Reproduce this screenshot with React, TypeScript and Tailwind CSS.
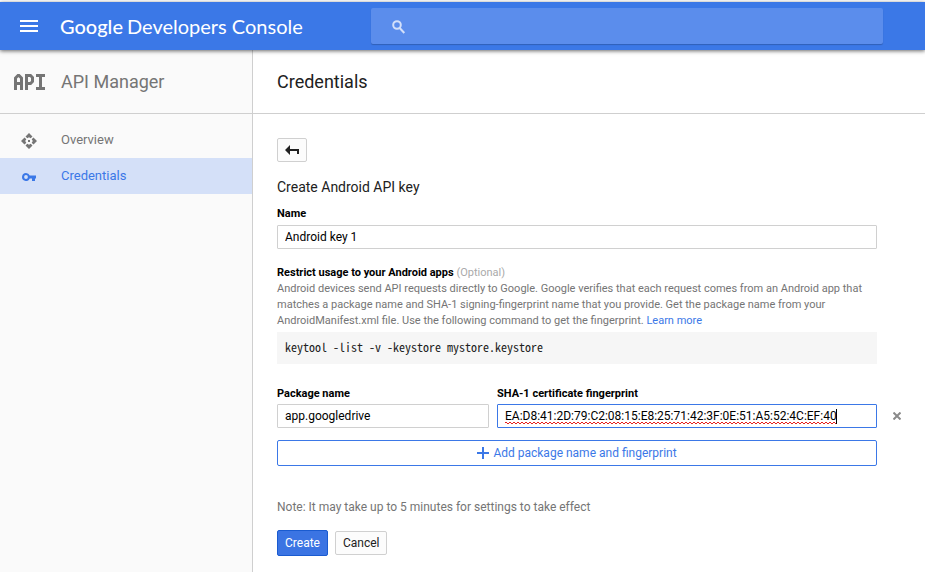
import { useState } from "react";

function MenuIcon() {
  return (
    <svg width="18" height="12" viewBox="0 0 18 12" fill="currentColor" shapeRendering="crispEdges" aria-hidden="true">
      <path d="M0 0h18v2H0zM0 5h18v2H0zM0 10h18v2H0z" />
    </svg>
  );
}

function ApiLogo() {
  return (
    <svg width="31" height="16" viewBox="0 0 31 16" fill="none" stroke="#757575" strokeWidth="3" aria-hidden="true">
      <path d="M1.500 16V4L4 1.500h1L7.500 4V16M1.500 9.500h6" />
      <path d="M12.500 16V1.500h4L18.500 3.500v4L16.500 9.500h-4" />
      <path d="M22 1.500h9M22 14.500h9M26.500 1v14" />
    </svg>
  );
}

function OverviewIcon() {
  return (
    <svg width="16" height="16" viewBox="0 0 16 16" fill="#757575" aria-hidden="true">
      <path d="M8 0l3.500 3.500L9.700 5.300 8 4.200 6.300 5.300 4.500 3.500z" />
      <path d="M8 16l3.500-3.500-1.800-1.800L8 11.800l-1.700-1.100-1.800 1.800z" />
      <path d="M0 8l3.500-3.500 1.800 1.800L4.200 8l1.100 1.700-1.800 1.800z" />
      <path d="M16 8l-3.500-3.500-1.800 1.800L11.800 8l-1.100 1.700 1.800 1.800z" />
      <rect x="7" y="7" width="2" height="2" />
    </svg>
  );
}

function KeyIcon() {
  return (
    <svg width="14" height="8" viewBox="0 0 14 8" fill="#3b78e7" aria-hidden="true">
      <path fillRule="evenodd" d="M4 0a4 4 0 0 1 3.700 2.600H14v3h-1V8h-3V5.600H7.700A4 4 0 1 1 4 0zM4 2.100a1.900 1.900 0 1 0 0 3.800 1.900 1.900 0 0 0 0-3.800z" />
    </svg>
  );
}

function SearchIcon() {
  return (
    <svg width="14" height="14" viewBox="0 0 14 14" fill="none" stroke="#d3e0fa" strokeWidth="2" aria-hidden="true">
      <circle cx="5" cy="5" r="3.800" />
      <path d="M7.700 8l4.600 5" />
    </svg>
  );
}

function BackIcon() {
  return (
    <svg width="14" height="10" viewBox="0 0 14 10" fill="#212121" aria-hidden="true">
      <path d="M0 5l5-5v4h9v5h-2V6H5v4z" />
    </svg>
  );
}

function SpellingMark() {
  return (
    <svg className="h-[3px] w-[331px]" aria-hidden="true">
      <defs>
        <pattern id="wave" width="4" height="3" patternUnits="userSpaceOnUse">
          <path d="M-1 3L1 1 3 3 5 1" stroke="#e5201c" fill="none" />
        </pattern>
      </defs>
      <rect width="100%" height="3" fill="url(#wave)" />
    </svg>
  );
}

const label = "block text-[11px] leading-4 font-bold text-black";
const field = "block h-6 w-full border bg-white px-[7px] text-xs text-black outline-none rounded-[1px]";

export default function App() {
  const [name, setName] = useState("Android key 1");
  const [pkg, setPkg] = useState("app.googledrive");
  const [sha, setSha] = useState("EA:D8:41:2D:79:C2:08:15:E8:25:71:42:3F:0E:51:A5:52:4C:EF:40");

  return (
    <div className="flex min-h-screen flex-col bg-white pt-[2px] font-[Roboto,sans-serif] text-[#212121]">
      <header className="relative z-10 flex h-12 items-center bg-[#3b78e7] text-white shadow-[0_1px_4px_rgba(0,0,0,0.6)]">
        <div className="flex w-[371px] shrink-0 items-center pl-5">
          <button type="button" aria-label="Menu" className="mr-[22px]">
            <MenuIcon />
          </button>
          <a href="#home" className="flex gap-1 font-[Lato,sans-serif] text-xl whitespace-nowrap">
            <span className="font-medium">Google</span>
            <span>Developers Console</span>
          </a>
        </div>
        <label className="mr-[42px] flex h-9 flex-1 items-center rounded-[2px] bg-[#5b8dec] pt-px pl-[21px] shadow-[0_1px_1px_rgba(0,0,0,0.2)]">
          <SearchIcon />
          <input type="search" aria-label="Search" className="ml-3 h-full flex-1 bg-transparent outline-none" />
        </label>
      </header>

      <div className="flex flex-1">
        <aside className="w-[253px] shrink-0 border-r border-[#cfcfcf] bg-[#fafafa]">
          <div className="flex h-16 items-center border-b border-[#cfcfcf] pl-[14px]">
            <ApiLogo />
            <h2 className="ml-4 text-lg text-[#757575]">API Manager</h2>
          </div>
          <nav className="pt-2 text-[13px]">
            <a href="#overview" className="flex h-9 items-center text-[#757575]">
              <span className="flex w-[61px] justify-center pt-0.5 pr-1">
                <OverviewIcon />
              </span>
              Overview
            </a>
            <a href="#credentials" className="flex h-9 items-center bg-[#d4e0f8] text-[#3b78e7]">
              <span className="flex w-[61px] justify-center pt-0.5 pr-1">
                <KeyIcon />
              </span>
              Credentials
            </a>
          </nav>
        </aside>

        <main className="min-w-0 flex-1">
          <div className="flex h-16 items-center border-b border-[#cfcfcf] pl-6">
            <h1 className="text-lg">Credentials</h1>
          </div>

          <form className="px-6 pt-6" onSubmit={(e) => e.preventDefault()}>
            <button
              type="button"
              aria-label="Back"
              className="flex h-6 w-[30px] items-center justify-center rounded-[2px] border border-[#d0d0d0] bg-[#fcfcfc]"
            >
              <BackIcon />
            </button>
            <h2 className="mt-[15px] text-sm leading-5">Create Android API key</h2>

            <div className="max-w-[600px]">
              <label htmlFor="name" className={`${label} mt-[9px]`}>
                Name
              </label>
              <input
                id="name"
                value={name}
                onChange={(e) => setName(e.target.value)}
                className={`${field} mt-[3px] border-[#d0d0d0]`}
              />

              <section className="mt-4 text-[11px] leading-4 text-[#757575]">
                <h3>
                  <b className="text-black">Restrict usage to your Android apps</b>{" "}
                  <span className="text-[#aaaaaa]">(Optional)</span>
                </h3>
                <p>
                  Android devices send API requests directly to Google. Google verifies that each request comes from an
                  Android app that matches a package name and SHA-1 signing-fingerprint name that you provide. Get the
                  package name from your AndroidManifest.xml file. Use the following command to get the fingerprint.{" "}
                  <a href="#learn" className="text-[#3b78e7]">
                    Learn more
                  </a>
                </p>
              </section>
              <pre className="mt-[3px] bg-[#f6f6f6] px-2 pt-[7px] pb-[9px] font-['Noto_Sans_Mono_CJK_SC','Liberation_Mono',monospace] text-xs leading-4">
                keytool -list -v -keystore mystore.keystore
              </pre>
            </div>

            <div className="mt-[22px] flex items-end">
              <div className="flex max-w-[600px] flex-1 gap-2">
                <div className="w-[212px] shrink-0">
                  <label htmlFor="package" className={label}>
                    Package name
                  </label>
                  <input
                    id="package"
                    value={pkg}
                    onChange={(e) => setPkg(e.target.value)}
                    className={`${field} mt-[2px] border-[#d0d0d0]`}
                  />
                </div>
                <div className="flex-1">
                  <label htmlFor="sha" className={label}>
                    SHA-1 certificate fingerprint
                  </label>
                  <div className="relative mt-[2px]">
                    <input
                      id="sha"
                      value={sha}
                      spellCheck={false}
                      onChange={(e) => setSha(e.target.value)}
                      className={`${field} border-[#3b78e7]`}
                    />
                    <span className="pointer-events-none absolute bottom-1 left-2 flex h-[15px] items-end">
                      <SpellingMark />
                      <span className="h-full w-px bg-black" />
                    </span>
                  </div>
                </div>
              </div>
              <button type="button" aria-label="Remove" className="-mr-6 flex h-6 w-10 items-center justify-center">
                <svg width="8" height="8" viewBox="0 0 8 8" stroke="#8a8a8a" strokeWidth="2" aria-hidden="true">
                  <path d="M0.500 0.500l7 7M7.500 0.500l-7 7" />
                </svg>
              </button>
            </div>

            <button
              type="button"
              className="mt-3 flex h-[26px] w-full max-w-[600px] items-center justify-center gap-1 rounded-[2px] border border-[#3b78e7] text-xs text-[#3b78e7]"
            >
              <svg width="12" height="12" viewBox="0 0 12 12" fill="currentColor" aria-hidden="true">
                <path d="M5 0h2v5h5v2H7v5H5V7H0V5h5z" />
              </svg>
              Add package name and fingerprint
            </button>

            <p className="mt-[33px] text-xs leading-4 text-[#757575]">
              Note: It may take up to 5 minutes for settings to take effect
            </p>
            <div className="mt-[15px] flex items-center gap-[7px] text-xs">
              <button
                type="submit"
                className="h-[26px] rounded-[2px] border border-[#1a5bd0] bg-[#3b74e3] px-[7px] text-white"
              >
                Create
              </button>
              <button type="button" className="h-6 rounded-[2px] border border-[#d0d0d0] bg-[#fcfcfc] px-[7px]">
                Cancel
              </button>
            </div>
          </form>
        </main>
      </div>
    </div>
  );
}
